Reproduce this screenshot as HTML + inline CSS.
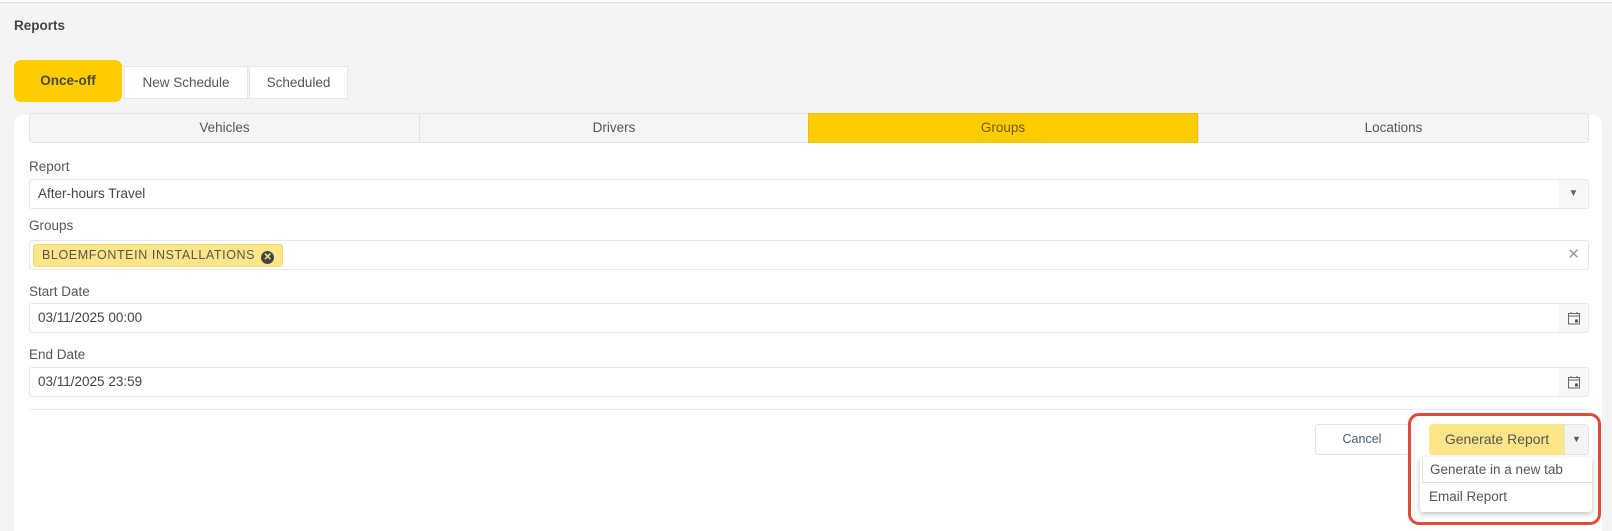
<!DOCTYPE html>
<html><head><style>
*{box-sizing:border-box;margin:0;padding:0}
body{width:1612px;height:531px;overflow:hidden;background:#f4f4f4;font-family:"Liberation Sans",sans-serif;color:#555;position:relative;font-size:13.5px}
.abs{position:absolute}
.topline{left:0;top:0;width:1612px;height:3px;border-bottom:1px solid #ddd;background:#fff}
h1{position:absolute;left:14px;top:18px;font-size:13.5px;font-weight:bold;color:#444}
.tab{position:absolute;top:66px;height:33px;background:#fff;border:1px solid #e6e6e6;text-align:center;line-height:31px;font-size:13.5px;color:#555}
.card{left:14px;top:115px;width:1588px;height:416px;background:#fff;border-radius:8px 8px 0 0}
.sub{position:absolute;top:113px;height:30px;background:#f5f5f5;border:1px solid #e3e3e3;text-align:center;line-height:28px;font-size:13.5px;color:#555}
.lbl{position:absolute;left:29px;font-size:13.5px;color:#555}
.inp{position:absolute;left:29px;width:1560px;height:30px;border:1px solid #e6e6e6;border-radius:3px;background:#fff;font-size:13.5px;line-height:28px;padding-left:8px;color:#444}
.btnr{position:absolute;right:0;top:0;width:29px;height:28px;background:#f7f7f7;text-align:center;color:#666;font-size:10px}
</style></head><body>
<div class="abs topline"></div>
<h1>Reports</h1>
<div class="abs" style="left:14px;top:60px;width:108px;height:42px;background:#ffcc00;border-radius:7px;text-align:center;line-height:42px;font-weight:bold;font-size:13.5px;color:#4a4a3a">Once-off</div>
<div class="tab" style="left:124px;width:124px">New Schedule</div>
<div class="tab" style="left:249px;width:99px">Scheduled</div>
<div class="abs card"></div>
<div class="sub" style="left:29px;width:391px;border-radius:3px 0 0 3px">Vehicles</div>
<div class="sub" style="left:419px;width:390px">Drivers</div>
<div class="sub" style="left:808px;width:390px;background:#ffcc00;border-color:#f0c000;color:#6a5a10">Groups</div>
<div class="sub" style="left:1198px;width:391px;border-radius:0 3px 3px 0">Locations</div>

<div class="lbl" style="top:159px">Report</div>
<div class="inp" style="top:179px">After-hours Travel<div class="btnr">▼</div></div>
<div class="lbl" style="top:218px">Groups</div>
<div class="inp" style="top:240px;padding-left:3px">
<span style="display:inline-block;margin-top:3px;height:23px;line-height:21px;background:#fde68a;border:1px solid #f3d769;border-radius:3px;padding:0 8px;font-size:12.5px;letter-spacing:.6px;color:#555;vertical-align:top">BLOEMFONTEIN INSTALLATIONS <span style="display:inline-block;width:13px;height:13px;border-radius:50%;background:#444;color:#fde68a;font-size:10px;line-height:13px;text-align:center;font-weight:bold;vertical-align:-1px;margin-left:2px;letter-spacing:0">✕</span></span>
<span style="position:absolute;right:8px;top:0;color:#999;font-size:15px">✕</span></div>
<div class="lbl" style="top:284px">Start Date</div>
<div class="inp" style="top:303px">03/11/2025 00:00<div class="btnr"><svg width="14" height="14" viewBox="0 0 14 14" style="margin-top:7px"><rect x="1.5" y="2.5" width="11" height="10.5" fill="none" stroke="#666"/><line x1="1.5" y1="5" x2="12.5" y2="5" stroke="#666"/><line x1="4" y1="1" x2="4" y2="3" stroke="#666"/><line x1="10" y1="1" x2="10" y2="3" stroke="#666"/><rect x="8" y="8.5" width="3" height="3" fill="#555"/></svg></div></div>
<div class="lbl" style="top:347px">End Date</div>
<div class="inp" style="top:367px">03/11/2025 23:59<div class="btnr"><svg width="14" height="14" viewBox="0 0 14 14" style="margin-top:7px"><rect x="1.5" y="2.5" width="11" height="10.5" fill="none" stroke="#666"/><line x1="1.5" y1="5" x2="12.5" y2="5" stroke="#666"/><line x1="4" y1="1" x2="4" y2="3" stroke="#666"/><line x1="10" y1="1" x2="10" y2="3" stroke="#666"/><rect x="8" y="8.5" width="3" height="3" fill="#555"/></svg></div></div>
<div class="abs" style="left:29px;top:409px;width:1560px;height:1px;background:#ebebeb"></div>

<div class="abs" style="left:1315px;top:424px;width:94px;height:31px;border:1px solid #e3e3e3;border-radius:3px;text-align:center;line-height:29px;font-size:12.5px;color:#4a5a6a">Cancel</div>
<div class="abs" style="left:1429px;top:424px;width:136px;height:31px;background:#fde68a;border-radius:3px 0 0 3px;text-align:center;line-height:31px;font-size:14px;color:#555">Generate Report</div>
<div class="abs" style="left:1564px;top:424px;width:25px;height:31px;background:#f3f3f3;border:1px solid #e3e3e3;border-radius:0 3px 3px 0;text-align:center;line-height:29px;font-size:9px;color:#555">▼</div>
<div class="abs" style="left:1420px;top:457px;width:172px;height:55px;background:#fff;border-radius:3px;box-shadow:0 2px 6px rgba(0,0,0,.25)"></div>
<div class="abs" style="left:1422px;top:458px;width:170px;height:25px;border-left:1px solid #ddd;border-bottom:1px solid #ddd;padding-left:7px;line-height:23px;font-size:13.5px;color:#555">Generate in a new tab</div>
<div class="abs" style="left:1429px;top:489px;font-size:13.5px;color:#555">Email Report</div>
<div class="abs" style="left:1408px;top:413px;width:193px;height:112px;border:3px solid #e04a3a;border-radius:11px"></div>
</body></html>
